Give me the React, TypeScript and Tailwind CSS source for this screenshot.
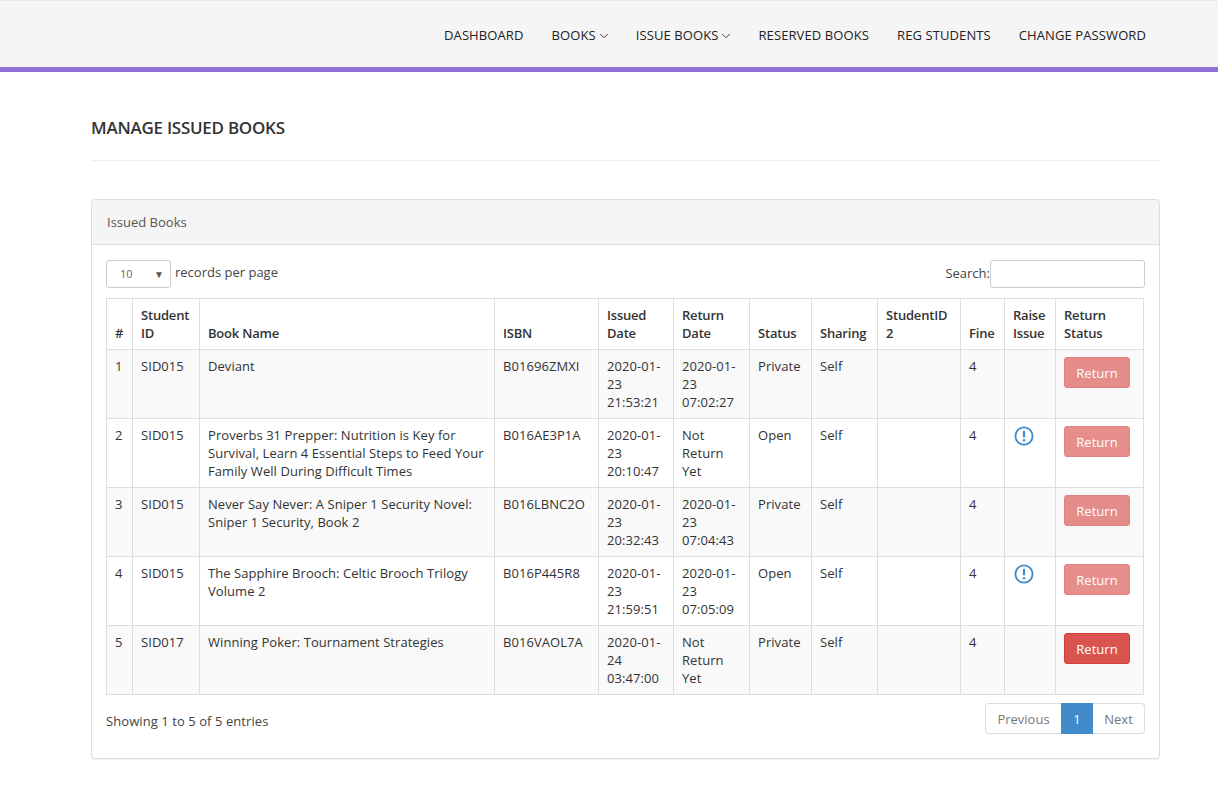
import React from 'react';
import { ChevronDown } from 'lucide-react';

type Row = {
  id: number;
  student: string;
  book: string;
  isbn: string;
  issued: string;
  returned: string;
  status: string;
  issue: boolean;
  done: boolean;
};

const ROWS: Row[] = [
  { id: 1, student: 'SID015', book: 'Deviant', isbn: 'B01696ZMXI', issued: '2020-01-23 21:53:21', returned: '2020-01-23 07:02:27', status: 'Private', issue: false, done: true },
  { id: 2, student: 'SID015', book: 'Proverbs 31 Prepper: Nutrition is Key for Survival, Learn 4 Essential Steps to Feed Your Family Well During Difficult Times', isbn: 'B016AE3P1A', issued: '2020-01-23 20:10:47', returned: 'Not Return Yet', status: 'Open', issue: true, done: true },
  { id: 3, student: 'SID015', book: 'Never Say Never: A Sniper 1 Security Novel: Sniper 1 Security, Book 2', isbn: 'B016LBNC2O', issued: '2020-01-23 20:32:43', returned: '2020-01-23 07:04:43', status: 'Private', issue: false, done: true },
  { id: 4, student: 'SID015', book: 'The Sapphire Brooch: Celtic Brooch Trilogy Volume 2', isbn: 'B016P445R8', issued: '2020-01-23 21:59:51', returned: '2020-01-23 07:05:09', status: 'Open', issue: true, done: true },
  { id: 5, student: 'SID017', book: 'Winning Poker: Tournament Strategies', isbn: 'B016VAOL7A', issued: '2020-01-24 03:47:00', returned: 'Not Return Yet', status: 'Private', issue: false, done: false },
];

const COLS = [
  { label: '#', w: 'w-[26px]' },
  { label: 'Student ID', w: 'w-[67px]' },
  { label: 'Book Name', w: 'w-[295px]' },
  { label: 'ISBN', w: 'w-[104px]' },
  { label: 'Issued Date', w: 'w-[75px]' },
  { label: 'Return Date', w: 'w-[76px]' },
  { label: 'Status', w: 'w-[62px]' },
  { label: 'Sharing', w: 'w-[66px]' },
  { label: 'StudentID 2', w: 'w-[83px]' },
  { label: 'Fine', w: 'w-[44px]' },
  { label: 'Raise Issue', w: 'w-[51px]' },
  { label: 'Return Status', w: 'w-[88px]' },
];

const td = 'border border-[#ddd] px-2 pt-[7px] pb-[7px] align-top break-words tracking-[0.06px]';

const NavItem = ({ label, caret }: { label: string; caret?: boolean }) => (
  <a className="flex items-center gap-[1px] text-[13px] tracking-[0.1px] text-[#222]">
    {label}
    {caret && <ChevronDown size={14} strokeWidth={1.5} className="mt-[2px] mr-[-3px]" />}
  </a>
);

const IssueIcon = () => (
  <svg width="20" height="20" viewBox="0 0 20 20" className="ml-[1px] block">
    <circle cx="10" cy="10" r="8.6" fill="none" stroke="#428bca" strokeWidth="1.9" />
    <rect x="8.9" y="4.8" width="2.2" height="6.8" rx="1" fill="#428bca" />
    <circle cx="10" cy="14.2" r="1.2" fill="#428bca" />
  </svg>
);

const App: React.FC = () => {
  return (
    <div className="min-h-[794px] bg-white text-[13px] leading-[18px] text-[#333] font-['Open_Sans',sans-serif]">
      <nav className="h-[72px] border-t border-t-[#e7e7e7] border-b-[5px] border-b-[#9370db] bg-[#f5f5f5] flex items-center justify-end gap-[28px] pr-[72px] pt-[1px]">
        <NavItem label="DASHBOARD" />
        <NavItem label="BOOKS" caret />
        <NavItem label="ISSUE BOOKS" caret />
        <NavItem label="RESERVED BOOKS" />
        <NavItem label="REG STUDENTS" />
        <NavItem label="CHANGE PASSWORD" />
      </nav>

      <main className="mr-[58px] ml-[91px] pt-[45px]">
        <h1 className="text-[17px] leading-[22px] font-semibold tracking-[-0.26px] text-[#333] pb-[21px] border-b border-[#eee] uppercase">
          Manage Issued Books
        </h1>

        <section className="mt-[38px] border border-[#ddd] rounded-[4px] bg-white shadow-[0_1px_1px_rgba(0,0,0,0.05)]">
          <div className="h-[45px] bg-[#f5f5f5] border-b border-[#ddd] rounded-t-[4px] px-[15px] flex items-center text-[#555]">
            Issued Books
          </div>
          <div className="px-[14px] pt-[15px] pb-[24px]">
            <div className="flex items-center justify-between h-[28px]">
              <div className="flex items-center gap-[4px] text-[#444]">
                <div className="w-[65px] h-[28px] border border-[#ccc] rounded-[3px] flex items-center justify-between pl-[13px] pr-[6px] text-[11px] text-[#666]">
                  <span>10</span>
                  <span className="text-[10px] text-[#555]">▼</span>
                </div>
                <span className="mb-[4px]">records per page</span>
              </div>
              <div className="flex items-center text-[#444]">
                <span className="mb-[2px]">Search:</span>
                <input className="w-[155px] h-[28px] border border-[#ccc] rounded-[3px] bg-white" />
              </div>
            </div>

            <table className="mt-[10px] w-[1037px] table-fixed border-collapse">
              <colgroup>
                {COLS.map(c => <col key={c.label} className={c.w} />)}
              </colgroup>
              <thead>
                <tr>
                  {COLS.map(c => (
                    <th key={c.label} className="border border-[#ddd] px-2 pt-[7px] pb-[7px] align-bottom text-left font-semibold tracking-[-0.2px] text-[#333]">
                      {c.label}
                    </th>
                  ))}
                </tr>
              </thead>
              <tbody>
                {ROWS.map(r => (
                  <tr key={r.id} className={r.id % 2 === 1 ? 'bg-[#f9f9f9]' : 'bg-white'}>
                    <td className={td}>{r.id}</td>
                    <td className={td}>{r.student}</td>
                    <td className={td}>{r.book}</td>
                    <td className={td}>{r.isbn}</td>
                    <td className={td}>{r.issued}</td>
                    <td className={td}>{r.returned}</td>
                    <td className={td}>{r.status}</td>
                    <td className={td}>Self</td>
                    <td className={td}></td>
                    <td className={td}>4</td>
                    <td className={td}>{r.issue && <IssueIcon />}</td>
                    <td className={td}>
                      <button className={`block w-[66px] h-[31px] rounded-[3px] border border-[#d43f3a] bg-[#d9534f] text-white ${r.done ? 'opacity-65' : ''}`}>
                        Return
                      </button>
                    </td>
                  </tr>
                ))}
              </tbody>
            </table>

            <div className="mt-[8px] flex items-center justify-between">
              <span className="text-[#444] mt-[4px] tracking-[0.07px]">Showing 1 to 5 of 5 entries</span>
              <div className="flex h-[31px] text-[#777] bg-white">
                <span className="w-[76px] border border-[#ddd] border-r-0 rounded-l-[4px] flex items-center justify-center">Previous</span>
                <span className="w-[32px] bg-[#428bca] text-white flex items-center justify-center">1</span>
                <span className="w-[52px] border border-[#ddd] border-l-0 rounded-r-[4px] flex items-center justify-center">Next</span>
              </div>
            </div>
          </div>
        </section>
      </main>
    </div>
  );
};

export default App;
